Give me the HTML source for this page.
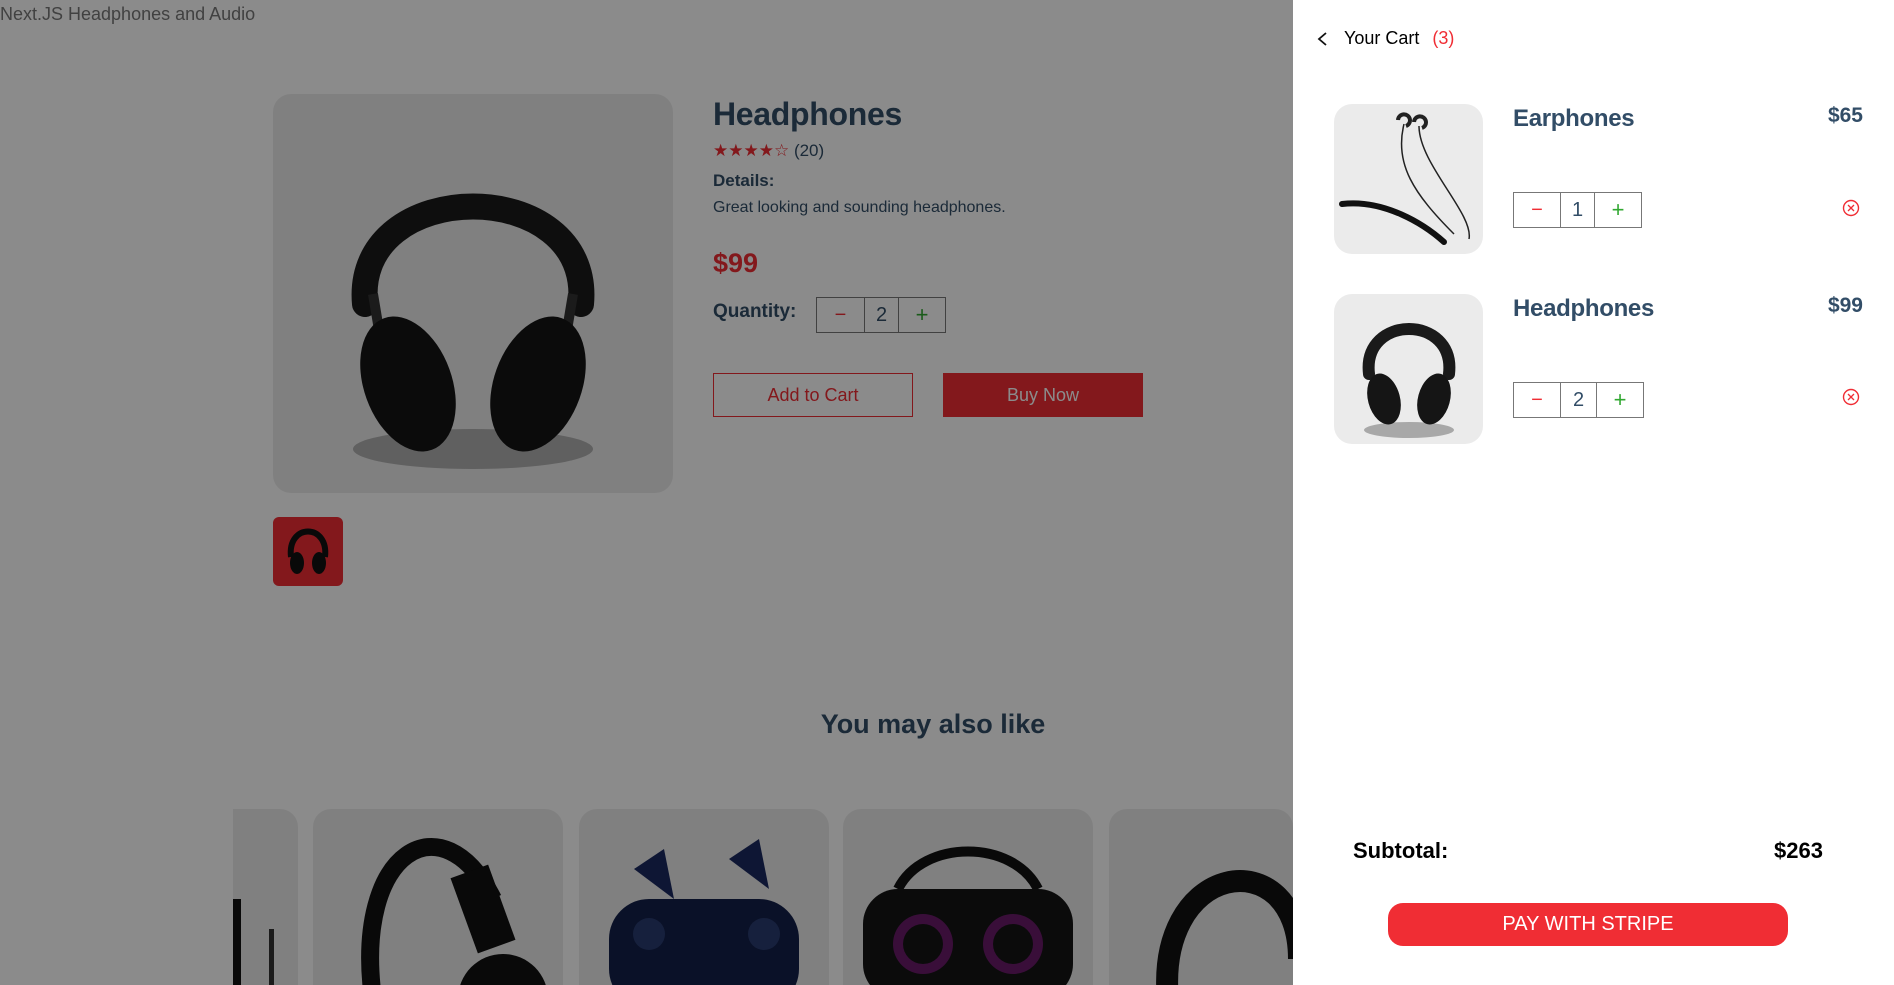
<!DOCTYPE html>
<html style="overflow:hidden;height:985px"><head><meta charset="utf-8"><style>
*{margin:0;padding:0;box-sizing:border-box}
svg{display:block}
body{width:1894px;height:985px;overflow:hidden;background:#fff;font-family:"Liberation Sans",sans-serif;position:relative;color:#324d67}
.abs{position:absolute}
.box{background:#ebebeb;border-radius:18px;overflow:hidden}
.card{background:#ebebeb;border-radius:18px 18px 0 0;overflow:hidden;height:176px;top:0}
.qty{position:absolute;border:1px solid #777;display:flex;align-items:center}
.qty span{display:flex;align-items:center;justify-content:center;height:100%}
#ov{position:absolute;left:0;top:0;width:1293px;height:985px;background:rgba(0,0,0,0.455)}
</style></head><body>
<div class="abs" style="left:0;top:4px;font-size:18px;color:#777">Next.JS Headphones and Audio</div>

<div class="abs box" style="left:273px;top:94px;width:400px;height:399px">
<svg width="400" height="399" viewBox="0 0 400 399">
<ellipse cx="200" cy="355" rx="120" ry="20" fill="#444" opacity=".35"/>
<path d="M92 210 C80 80 320 80 308 210" stroke="#1a1a1a" stroke-width="26" fill="none" stroke-linecap="round"/>
<path d="M100 200 L110 260 M300 200 L290 260" stroke="#333" stroke-width="10"/>
<ellipse cx="135" cy="290" rx="44" ry="70" transform="rotate(-20 135 290)" fill="#151515"/>
<ellipse cx="265" cy="290" rx="44" ry="70" transform="rotate(20 265 290)" fill="#151515"/>
</svg></div>
<div class="abs" style="left:273px;top:517px;width:70px;height:69px;background:#f02d34;border-radius:6px">
<svg width="70" height="69"><path d="M18 40 C14 6 56 6 52 40" stroke="#111" stroke-width="6" fill="none"/><ellipse cx="24" cy="46" rx="7" ry="11" fill="#111"/><ellipse cx="46" cy="46" rx="7" ry="11" fill="#111"/></svg></div>

<div class="abs" style="left:713px;top:96px;font-size:32px;font-weight:700;letter-spacing:-0.3px">Headphones</div>
<div class="abs" style="left:713px;top:141px;font-size:17px;color:#f02d34">★★★★☆ <span style="color:#324d67">(20)</span></div>
<div class="abs" style="left:713px;top:171px;font-size:17px;font-weight:700">Details:</div>
<div class="abs" style="left:713px;top:199px;font-size:16px">Great looking and sounding headphones.</div>
<div class="abs" style="left:713px;top:248px;font-size:27px;font-weight:700;color:#f02d34">$99</div>
<div class="abs" style="left:713px;top:301px;font-size:19px;font-weight:700">Quantity:</div>
<div class="qty" style="left:816px;top:297px;width:130px;height:36px">
<span style="width:47px;color:#f02d34;font-size:20px">−</span><span style="width:35px;border-left:1px solid #777;border-right:1px solid #777;font-size:20px">2</span><span style="width:46px;color:#31a831;font-size:22px">+</span></div>
<div class="abs" style="left:713px;top:373px;width:200px;height:44px;border:1px solid #f02d34;color:#f02d34;font-size:18px;display:flex;align-items:center;justify-content:center">Add to Cart</div>
<div class="abs" style="left:943px;top:373px;width:200px;height:44px;background:#f02d34;color:#fff;font-size:18px;display:flex;align-items:center;justify-content:center">Buy Now</div>

<div class="abs" style="left:0;width:1866px;top:709px;text-align:center;font-size:27px;font-weight:700">You may also like</div>

<div class="abs" style="left:0;top:809px;width:1293px;height:176px;overflow:hidden">
<div class="abs card" style="left:233px;width:65px;border-radius:0 18px 0 0"><div style="position:absolute;left:0;top:90px;width:8px;height:86px;background:#111"></div><div style="position:absolute;left:36px;top:120px;width:5px;height:56px;background:#333"></div></div>
<div class="abs card" style="left:313px;width:250px">
<svg width="250" height="176"><path d="M60 190 C40 40 130 -10 180 90" stroke="#111" stroke-width="18" fill="none"/><rect x="150" y="60" width="40" height="80" fill="#111" transform="rotate(-20 170 100)"/><circle cx="190" cy="190" r="45" fill="#111"/></svg></div>
<div class="abs card" style="left:579px;width:250px">
<svg width="250" height="176"><rect x="30" y="90" width="190" height="110" rx="40" fill="#14204a"/><circle cx="70" cy="125" r="16" fill="#2a3c70"/><circle cx="185" cy="125" r="16" fill="#2a3c70"/><path d="M55 60 l30 -20 l10 50 z" fill="#1b2a60"/><path d="M150 50 l30 -20 l10 50 z" fill="#1b2a60"/></svg></div>
<div class="abs card" style="left:843px;width:250px">
<svg width="250" height="176"><path d="M55 80 C80 30 170 30 195 80" stroke="#111" stroke-width="10" fill="none"/><rect x="20" y="80" width="210" height="110" rx="35" fill="#151515"/><circle cx="80" cy="135" r="30" fill="#6a1a6a"/><circle cx="80" cy="135" r="20" fill="#151515"/><circle cx="170" cy="135" r="30" fill="#6a1a6a"/><circle cx="170" cy="135" r="20" fill="#151515"/></svg></div>
<div class="abs card" style="left:1109px;width:184px">
<svg width="184" height="176"><path d="M60 200 C40 50 190 30 190 150" stroke="#111" stroke-width="22" fill="none"/></svg></div>
</div>

<div id="ov"></div>

<div class="abs" style="left:1293px;top:0;width:601px;height:985px;background:#fff"></div>
<svg class="abs" style="left:1316px;top:31px" width="14" height="16"><path d="M10 2 L3 8 L10 14" stroke="#111" stroke-width="1.8" fill="none"/></svg>
<div class="abs" style="left:1344px;top:28px;font-size:18px;color:#000">Your Cart <span style="color:#f02d34;margin-left:8px">(3)</span></div>

<div class="abs box" style="left:1334px;top:104px;width:149px;height:150px">
<svg width="149" height="150"><path d="M70 20 C60 60 80 90 120 130 M85 22 C85 60 140 110 135 135" stroke="#222" stroke-width="1.5" fill="none"/><path d="M8 100 C50 95 90 120 110 138" stroke="#111" stroke-width="6" fill="none" stroke-linecap="round"/><path d="M64 16 a6 6 0 1 1 8 6 M80 18 a6 6 0 1 1 8 6" stroke="#222" stroke-width="4" fill="none"/></svg></div>
<div class="abs" style="left:1513px;top:105px;font-size:24px;font-weight:700;letter-spacing:-0.3px">Earphones</div>
<div class="abs" style="right:31px;top:104px;font-size:21px;font-weight:700">$65</div>
<div class="qty" style="left:1513px;top:192px;width:129px;height:36px">
<span style="width:46px;color:#f02d34;font-size:20px">−</span><span style="width:35px;border-left:1px solid #777;border-right:1px solid #777;font-size:20px">1</span><span style="width:46px;color:#31a831;font-size:22px">+</span></div>
<svg class="abs" style="left:1842px;top:199px" width="18" height="18"><circle cx="9" cy="9" r="7.5" stroke="#f02d34" stroke-width="1.4" fill="none"/><path d="M6 6 L12 12 M12 6 L6 12" stroke="#f02d34" stroke-width="1.3"/></svg>

<div class="abs box" style="left:1334px;top:294px;width:149px;height:150px">
<svg width="149" height="150"><ellipse cx="75" cy="136" rx="45" ry="8" fill="#444" opacity=".4"/><path d="M35 80 C28 20 122 20 115 80" stroke="#1a1a1a" stroke-width="12" fill="none" stroke-linecap="round"/><ellipse cx="50" cy="105" rx="16" ry="26" transform="rotate(-15 50 105)" fill="#151515"/><ellipse cx="100" cy="105" rx="16" ry="26" transform="rotate(15 100 105)" fill="#151515"/></svg></div>
<div class="abs" style="left:1513px;top:295px;font-size:24px;font-weight:700;letter-spacing:-0.3px">Headphones</div>
<div class="abs" style="right:31px;top:294px;font-size:21px;font-weight:700">$99</div>
<div class="qty" style="left:1513px;top:382px;width:131px;height:36px">
<span style="width:46px;color:#f02d34;font-size:20px">−</span><span style="width:37px;border-left:1px solid #777;border-right:1px solid #777;font-size:20px">2</span><span style="width:46px;color:#31a831;font-size:22px">+</span></div>
<svg class="abs" style="left:1842px;top:388px" width="18" height="18"><circle cx="9" cy="9" r="7.5" stroke="#f02d34" stroke-width="1.4" fill="none"/><path d="M6 6 L12 12 M12 6 L6 12" stroke="#f02d34" stroke-width="1.3"/></svg>

<div class="abs" style="left:1353px;top:838px;font-size:22px;font-weight:700;color:#000">Subtotal:</div>
<div class="abs" style="right:71px;top:838px;font-size:22px;font-weight:700;color:#000">$263</div>
<div class="abs" style="left:1388px;top:903px;width:400px;height:43px;background:#f02d34;border-radius:15px;color:#fff;font-size:20px;display:flex;align-items:center;justify-content:center">PAY WITH STRIPE</div>
</body></html>
